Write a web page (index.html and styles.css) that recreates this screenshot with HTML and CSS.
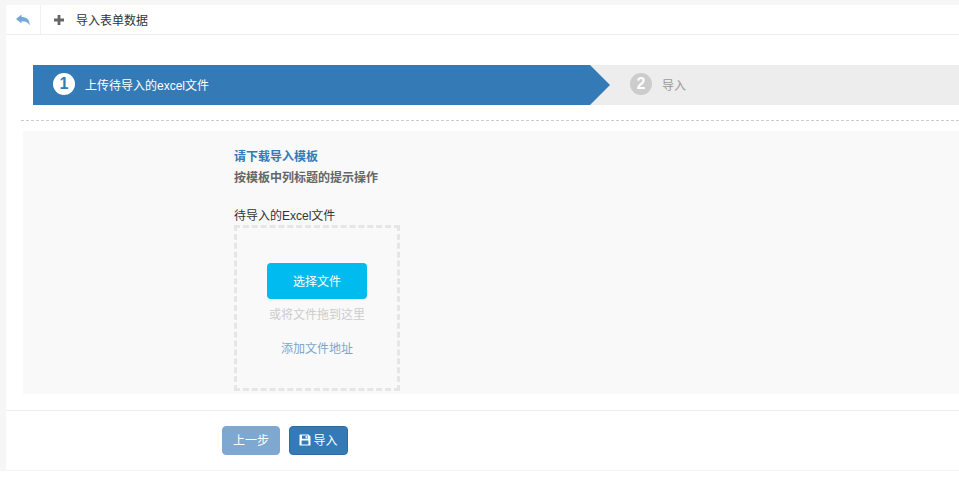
FILE: index.html
```html
<!DOCTYPE html>
<html lang="zh-CN">
<head>
    <meta charset="UTF-8">
    <meta name="viewport" content="width=device-width, initial-scale=1.0">
    <title>导入表单数据</title>
    <link rel="stylesheet" href="styles.css">
</head>
<body>
    <div class="page">
        <!-- Top toolbar -->
        <div class="toolbar">
            <div class="toolbar-back">
                <svg class="icon-back" viewBox="0 0 14 12" width="14" height="12"><path d="M0 5 L5.5 0.5 V3 C10 3 14 5 13.6 11.5 C12.6 8.6 10 7.2 5.5 7.2 V9.6 Z"/></svg>
            </div>
            <div class="toolbar-title">
                <svg class="icon-plus" viewBox="0 0 10 10" width="10" height="10"><path d="M3.6 0 H6.4 V3.6 H10 V6.4 H6.4 V10 H3.6 V6.4 H0 V3.6 H3.6 Z"/></svg>
                <span>导入表单数据</span>
            </div>
        </div>

        <div class="content">
            <!-- Step bar -->
            <div class="steps">
                <div class="step step-active">
                    <span class="step-num">1</span>
                    <span>上传待导入的excel文件</span>
                </div>
                <div class="step step-next">
                    <span class="step-num">2</span>
                    <span>导入</span>
                </div>
            </div>

            <div class="divider"></div>

            <!-- Upload panel -->
            <div class="panel">
                <div class="panel-inner">
                    <div class="tip tip-link">请下载导入模板</div>
                    <div class="tip tip-note">按模板中列标题的提示操作</div>
                    <div class="field-label">待导入的Excel文件</div>
                    <div class="dropzone">
                        <button class="pick-btn" type="button">选择文件</button>
                        <div class="drop-hint">或将文件拖到这里</div>
                        <a class="add-url" href="#">添加文件地址</a>
                    </div>
                </div>
            </div>

            <!-- Footer buttons -->
            <div class="footer">
                <button class="btn btn-prev" type="button">上一步</button>
                <button class="btn btn-import" type="button">
                    <svg viewBox="0 0 12 12" width="12" height="12"><path fill-rule="evenodd" d="M1 0.5 H9.5 L11.5 2.5 V11 Q11.5 11.5 11 11.5 H1 Q0.5 11.5 0.5 11 V1 Q0.5 0.5 1 0.5 Z M3 1.6 V4.8 H8.6 V1.6 Z M6.6 2.1 H7.9 V4.3 H6.6 Z M2.6 6.6 V10.4 H9.4 V6.6 Z"/></svg>
                    导入
                </button>
            </div>
        </div>
    </div>
</body>
</html>
```

FILE: styles.css
```css
/* Basic page settings */
html, body {
    margin: 0;
    padding: 0;
    background: #fff;
}

body {
    font-family: "Liberation Sans", "Noto Sans CJK SC", sans-serif;
    font-size: 12px;
    color: #333;
    overflow: hidden;
}

/* Grey strip on top and left */
.page {
    height: 471px;
    box-sizing: border-box;
    padding: 5px 0 0 6px;
    background: #f6f6f6;
    display: flex;
    flex-direction: column;
}

/* Toolbar */
.toolbar {
    height: 30px;
    box-sizing: border-box;
    background: #fff;
    border-bottom: 1px solid #eeeeee;
    display: flex;
    flex-shrink: 0;
}

.toolbar-back {
    width: 35px;
    box-sizing: border-box;
    border-right: 1px solid #f1f1f1;
    display: flex;
    align-items: center;
    justify-content: center;
}

.icon-back {
    fill: #74a8d6;
}

.toolbar-title {
    display: flex;
    align-items: center;
    padding-left: 13px;
    gap: 12px;
}

.icon-plus {
    fill: #666;
}

/* Main white area */
.content {
    flex: 1;
    background: #fff;
    border-bottom: 1px solid #f3f3f3;
    padding-top: 30px;
    min-height: 0;
}

/* Step bar */
.steps {
    margin-left: 27px;
    height: 40px;
    display: flex;
    background: #ededed;
}

.step {
    display: flex;
    align-items: center;
    gap: 10px;
    height: 40px;
    box-sizing: border-box;
    padding-bottom: 2px;
}

.step-active {
    position: relative;
    width: 557px;
    padding-left: 20px;
    background: #337ab7;
    color: #fff;
}

/* Arrow on the active step */
.step-active::after {
    content: "";
    position: absolute;
    left: 100%;
    top: 0;
    border-left: 20px solid #337ab7;
    border-top: 20px solid transparent;
    border-bottom: 20px solid transparent;
}

.step-next {
    padding-left: 40px;
    color: #999;
}

.step-num {
    width: 22px;
    height: 22px;
    border-radius: 50%;
    background: #fff;
    color: #337ab7;
    font-size: 16px;
    font-weight: bold;
    line-height: 22px;
    text-align: center;
}

.step-next .step-num {
    background: #ccc;
    color: #fff;
}

.divider {
    margin: 15px 0 10px 15px;
    border-top: 1px dashed #ccc;
}

/* Upload panel */
.panel {
    margin-left: 17px;
    height: 263px;
    background: #f9f9f9;
    overflow: hidden;
}

.panel-inner {
    margin-left: 211px;
    width: 166px;
    padding-top: 18px;
}

.tip {
    font-weight: bold;
    line-height: 16px;
}

.tip-link {
    color: #337ab7;
}

.tip-note {
    margin-top: 5px;
    color: #666;
}

.field-label {
    margin-top: 22px;
    line-height: 16px;
}

.dropzone {
    margin-top: 1px;
    width: 166px;
    height: 166px;
    box-sizing: border-box;
    border: 3px dashed #e6e6e6;
    display: flex;
    flex-direction: column;
    align-items: center;
    padding-top: 35px;
}

.pick-btn {
    width: 100px;
    height: 36px;
    border: 0;
    border-radius: 4px;
    background: #00bbf0;
    color: #fff;
    font: inherit;
    padding: 0 0 2px;
}

.drop-hint {
    margin-top: 8px;
    line-height: 16px;
    color: #ccc;
}

.add-url {
    margin-top: 18px;
    line-height: 16px;
    color: #7ba7ce;
    text-decoration: none;
}

/* Footer */
.footer {
    margin-top: 16px;
    border-top: 1px solid #eeeeee;
    padding: 15px 0 0 216px;
    display: flex;
    gap: 9px;
}

.btn {
    height: 29px;
    box-sizing: border-box;
    border: 1px solid #2e6da4;
    border-radius: 4px;
    background: #337ab7;
    color: #fff;
    font: inherit;
    padding: 0 0 2px;
    display: flex;
    align-items: center;
    justify-content: center;
    gap: 2px;
}

.btn svg {
    fill: #fff;
}

.btn-prev {
    width: 58px;
    background: #7ea8cf;
    border-color: #7ea8cf;
}

.btn-import {
    width: 59px;
}
```
